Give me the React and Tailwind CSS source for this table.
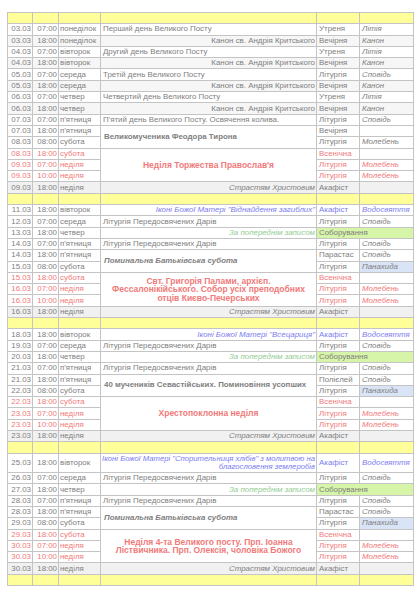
import React from "react";

const B = "border border-[#c4c4c4] p-0 leading-none whitespace-nowrap overflow-hidden";
const GRAY = "text-[#808080]";
const RED = "text-[#f07a7a]";
const BLUE = "text-[#7c7cf0]";
const GREEN = "text-[#93cc93]";
const H = "h-[11.3px]";

function Y() {
  return (
    <tr className={`${H} bg-[#ffff99]`}>
      {[0, 1, 2, 3, 4, 5].map((i) => (
        <td key={i} className={B} />
      ))}
    </tr>
  );
}

function R({ d, t, day, red, bg = "", ev = null, svc, svcCls, ex, exCls, exBg = "", green, h = H }) {
  const col = red ? RED : GRAY;
  return (
    <tr className={`${h} ${bg}`}>
      <td className={`${B} text-right pr-[1px] ${col}`}>{d}</td>
      <td className={`${B} text-right pr-[1px] ${col}`}>{t}</td>
      <td className={`${B} pl-[1px] ${col}`}>{day}</td>
      {ev}
      {green ? (
        <td colSpan={2} className={`${B} pl-[2px] bg-[#d6f5a8] ${GRAY}`}>
          Соборування
        </td>
      ) : (
        <>
          <td className={`${B} pl-[2px] ${svcCls || col}`}>{svc}</td>
          <td className={`${B} pl-[2px] italic ${exCls || col} ${exBg}`}>{ex}</td>
        </>
      )}
    </tr>
  );
}

const L = (txt) => <td className={`${B} pl-[2px] ${GRAY}`}>{txt}</td>;
const RU = (txt) => <td className={`${B} text-right pr-[1px] ${GRAY}`}>{txt}</td>;
const RI = (txt, c = GRAY) => <td className={`${B} text-right pr-[1px] italic ${c}`}>{txt}</td>;
const SPAN2 = (txt, italic) => (
  <td rowSpan={2} className={`${B} pl-[3px] font-bold text-[7.9px] ${italic ? "italic" : ""} ${GRAY}`}>
    {txt}
  </td>
);
const SPAN3 = (content) => (
  <td rowSpan={3} className={`${B} text-center font-bold text-[8.5px] leading-[9.7px] whitespace-normal ${RED}`}>
    {content}
  </td>
);

const CANON = "bg-[#f6f6f6]";
const PASS = "bg-[#f1f1f1]";

export default function App() {
  return (
    <div className="w-[420px] h-[594px] bg-white pl-[7px] pt-[12px] font-['Liberation_Sans',Arial,sans-serif] text-[7.9px]">
      <table className="border-collapse table-fixed w-[406px]">
        <colgroup>
          <col className="w-[25px]" />
          <col className="w-[26px]" />
          <col className="w-[42px]" />
          <col className="w-[216px]" />
          <col className="w-[43px]" />
          <col className="w-[54px]" />
        </colgroup>
        <tbody>
          <Y />
          <R d="03.03" t="07:00" day="понеділок" ev={L("Перший день Великого Посту")} svc="Утреня" ex="Літія" />
          <R d="03.03" t="18:00" day="понеділок" bg={CANON} ev={RU("Канон св. Андрія Критського")} svc="Вечірня" ex="Канон" />
          <R d="04.03" t="07:00" day="вівторок" ev={L("Другий день Великого Посту")} svc="Утреня" ex="Літія" />
          <R d="04.03" t="18:00" day="вівторок" bg={CANON} ev={RU("Канон св. Андрія Критського")} svc="Вечірня" ex="Канон" />
          <R d="05.03" t="07:00" day="середа" ev={L("Третій день Великого Посту")} svc="Літургія" ex="Сповідь" />
          <R d="05.03" t="18:00" day="середа" bg={CANON} ev={RU("Канон св. Андрія Критського")} svc="Вечірня" ex="Канон" />
          <R d="06.03" t="07:00" day="четвер" ev={L("Четвертий день Великого Посту")} svc="Утреня" ex="Літія" />
          <R d="06.03" t="18:00" day="четвер" bg={CANON} ev={RU("Канон св. Андрія Критського")} svc="Вечірня" ex="Канон" />
          <R d="07.03" t="07:00" day="п'ятниця" ev={L("П'ятий день Великого Посту. Освячення колива.")} svc="Літургія" ex="Сповідь" />
          <R d="07.03" t="18:00" day="п'ятниця" ev={SPAN2("Великомученика Феодора Тирона")} svc="Вечірня" ex="" />
          <R d="08.03" t="08:00" day="субота" svc="Літургія" ex="Молебень" />
          <R d="08.03" t="18:00" day="субота" red ev={SPAN3("Неділя Торжества Православ'я")} svc="Всенічна" ex="" />
          <R d="09.03" t="07:00" day="неділя" red svc="Літургія" ex="Молебень" />
          <R d="09.03" t="10:00" day="неділя" red svc="Літургія" ex="Молебень" />
          <R d="09.03" t="18:00" day="неділя" bg={PASS} ev={RI("Страстям Христовим")} svc="Акафіст" ex="" />
          <Y />
          <R d="11.03" t="18:00" day="вівторок" ev={RI('Іконі Божої Матері "Віднайдення загиблих"', BLUE)} svc="Акафіст" svcCls={BLUE} ex="Водосвяття" exCls={BLUE} />
          <R d="12.03" t="07:00" day="середа" ev={L("Літургія Передосвячених Дарів")} svc="Літургія" ex="Сповідь" />
          <R d="13.03" t="18:00" day="четвер" ev={RI("За попереднім записом", GREEN)} green />
          <R d="14.03" t="07:00" day="п'ятниця" ev={L("Літургія Передосвячених Дарів")} svc="Літургія" ex="Сповідь" />
          <R d="14.03" t="18:00" day="п'ятниця" ev={SPAN2("Поминальна Батьківська субота", true)} svc="Парастас" ex="Сповідь" />
          <R d="15.03" t="08:00" day="субота" svc="Літургія" ex="Панахида" exBg="bg-[#d9e4f6]" />
          <R
            d="15.03"
            t="18:00"
            day="субота"
            red
            ev={SPAN3(
              <>
                Свт. Григорія Палами, архієп.
                <br />
                Фессалонікійського. Собор усіх преподобних
                <br />
                отців Києво-Печерських
              </>
            )}
            svc="Всенічна"
            ex=""
          />
          <R d="16.03" t="07:00" day="неділя" red svc="Літургія" ex="Молебень" />
          <R d="16.03" t="10:00" day="неділя" red svc="Літургія" ex="Молебень" />
          <R d="16.03" t="18:00" day="неділя" bg={PASS} ev={RI("Страстям Христовим")} svc="Акафіст" ex="" />
          <Y />
          <R d="18.03" t="18:00" day="вівторок" ev={RI('Іконі Божої Матері "Всецариця"', BLUE)} svc="Акафіст" svcCls={BLUE} ex="Водосвяття" exCls={BLUE} />
          <R d="19.03" t="07:00" day="середа" ev={L("Літургія Передосвячених Дарів")} svc="Літургія" ex="Сповідь" />
          <R d="20.03" t="18:00" day="четвер" ev={RI("За попереднім записом", GREEN)} green />
          <R d="21.03" t="07:00" day="п'ятниця" ev={L("Літургія Передосвячених Дарів")} svc="Літургія" ex="Сповідь" />
          <R d="21.03" t="18:00" day="п'ятниця" ev={SPAN2("40 мучеників Севастійських. Поминовіння усопших")} svc="Полієлей" ex="Сповідь" />
          <R d="22.03" t="08:00" day="субота" svc="Літургія" ex="Панахида" exBg="bg-[#d9e4f6]" />
          <R d="22.03" t="18:00" day="субота" red ev={SPAN3("Хрестопоклонна неділя")} svc="Всенічна" ex="" />
          <R d="23.03" t="07:00" day="неділя" red svc="Літургія" ex="Молебень" />
          <R d="23.03" t="10:00" day="неділя" red svc="Літургія" ex="Молебень" />
          <R d="23.03" t="18:00" day="неділя" bg={PASS} ev={RI("Страстям Христовим")} svc="Акафіст" ex="" />
          <Y />
          <R
            d="25.03"
            t="18:00"
            day="вівторок"
            h="h-[19.5px]"
            ev={
              <td className={`${B} text-right pr-[1px] italic leading-[9px] text-[7.7px] ${BLUE}`}>
                Іконі Божої Матері "Спорительниця хлібів" з молитвою на
                <br />
                благословення землеробів
              </td>
            }
            svc="Акафіст"
            svcCls={BLUE}
            ex="Водосвяття"
            exCls={BLUE}
          />
          <R d="26.03" t="07:00" day="середа" ev={L("Літургія Передосвячених Дарів")} svc="Літургія" ex="Сповідь" />
          <R d="27.03" t="18:00" day="четвер" ev={RI("За попереднім записом", GREEN)} green />
          <R d="28.03" t="07:00" day="п'ятниця" ev={L("Літургія Передосвячених Дарів")} svc="Літургія" ex="Сповідь" />
          <R d="28.03" t="18:00" day="п'ятниця" ev={SPAN2("Поминальна Батьківська субота", true)} svc="Парастас" ex="Сповідь" />
          <R d="29.03" t="08:00" day="субота" svc="Літургія" ex="Панахида" exBg="bg-[#d9e4f6]" />
          <R
            d="29.03"
            t="18:00"
            day="субота"
            red
            ev={SPAN3(
              <>
                Неділя 4-та Великого посту. Прп. Іоанна
                <br />
                Ліствичника. Прп. Олексія, чоловіка Божого
              </>
            )}
            svc="Всенічна"
            ex=""
          />
          <R d="30.03" t="07:00" day="неділя" red svc="Літургія" ex="Молебень" />
          <R d="30.03" t="10:00" day="неділя" red svc="Літургія" ex="Молебень" />
          <R d="30.03" t="18:00" day="неділя" bg={PASS} ev={RI("Страстям Христовим")} svc="Акафіст" ex="" />
          <Y />
        </tbody>
      </table>
    </div>
  );
}
